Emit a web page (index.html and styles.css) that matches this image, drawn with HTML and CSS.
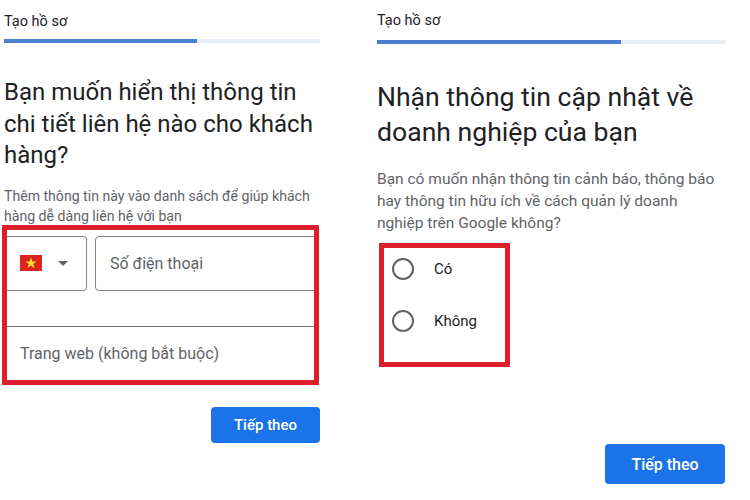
FILE: index.html
```html
<!DOCTYPE html>
<html lang="vi">
<head>
  <meta charset="UTF-8" />
  <title>Tạo hồ sơ</title>
  <link rel="stylesheet" href="styles.css">
</head>
<body>

  <section class="panel panel-left">
    <p class="top-title">Tạo hồ sơ</p>
    <div class="progress"><div class="progress-fill"></div></div>
    <h1>Bạn muốn hiển thị thông tin<br>chi tiết liên hệ nào cho khách<br>hàng?</h1>
    <p class="desc">Thêm thông tin này vào danh sách để giúp khách hàng dễ dàng liên hệ với bạn</p>

    <div class="mark contact-box">
      <div class="phone-row">
        <div class="country">
          <svg class="flag" width="22" height="16" viewBox="0 0 22 16">
            <rect width="22" height="16" fill="#d9251d"/>
            <polygon fill="#ffdf2b" points="11,2.5 12.5,6.4 16.5,6.4 13.3,8.9 14.4,13 11,10.6 7.6,13 8.7,8.9 5.5,6.4 9.5,6.4"/>
          </svg>
          <svg class="caret" width="10" height="5" viewBox="0 0 10 5">
            <polygon fill="#5f6368" points="0,0 10,0 5,5"/>
          </svg>
        </div>
        <div class="phone">Số điện thoại</div>
      </div>
      <div class="website">Trang web (không bắt buộc)</div>
    </div>

    <div class="actions"><button class="next-btn">Tiếp theo</button></div>
  </section>

  <section class="panel panel-right">
    <p class="top-title">Tạo hồ sơ</p>
    <div class="progress"><div class="progress-fill"></div></div>
    <h1>Nhận thông tin cập nhật về doanh nghiệp của bạn</h1>
    <p class="desc">Bạn có muốn nhận thông tin cảnh báo, thông báo hay thông tin hữu ích về cách quản lý doanh nghiệp trên Google không?</p>

    <div class="mark radio-box">
      <div class="radio-row"><span class="radio"></span><span>Có</span></div>
      <div class="radio-row"><span class="radio"></span><span>Không</span></div>
    </div>

    <div class="actions"><button class="next-btn">Tiếp theo</button></div>
  </section>

</body>
</html>
```

FILE: styles.css
```css
* {
  box-sizing: border-box;
  margin: 0;
  padding: 0;
}

body {
  width: 750px;
  height: 500px;
  overflow: hidden;
  display: flex;
  background: #fff;
  color: #202124;
  font-family: Roboto, sans-serif;
}

.panel {
  display: flex;
  flex-direction: column;
}

.panel-left {
  width: 316px;
  margin-left: 4px;
  padding-top: 13px;
}

.panel-right {
  width: 348px;
  margin-left: 57px;
  padding-top: 12px;
}

.top-title {
  font-size: 14.5px;
  line-height: 18px;
}

.progress {
  height: 4px;
  background: #e8eef8;
}

.panel-left .progress { margin-top: 8px; }
.panel-right .progress { margin-top: 10px; }

.progress-fill {
  height: 100%;
  background: #4a80cf;
}

.panel-left .progress-fill { width: 193px; }
.panel-right .progress-fill { width: 244px; }

h1 {
  font-weight: 400;
  color: #202124;
}

.panel-left h1 {
  font-size: 24px;
  line-height: 31.5px;
  margin-top: 34px;
  white-space: nowrap;
}

.panel-right h1 {
  font-size: 26.6px;
  line-height: 35px;
  margin-top: 35px;
}

.desc {
  color: #5f6368;
}

.panel-left .desc {
  font-size: 14.1px;
  line-height: 20px;
  margin-top: 14px;
}

.panel-right .desc {
  font-size: 15.5px;
  line-height: 22px;
  margin-top: 19px;
}

.mark {
  border: 5px solid #dc1f2b;
  overflow: hidden;
}

.contact-box {
  width: 317px;
  height: 160px;
  margin-top: -1px;
  margin-left: -2px;
  color: #5f6368;
  font-size: 16px;
}

.phone-row {
  display: flex;
  gap: 8px;
  margin-top: 6px;
  width: 320px;
  height: 55px;
}

.country,
.phone {
  border: 1px solid #80868b;
  display: flex;
  align-items: center;
}

.country {
  width: 80px;
  border-left: 0;
  border-radius: 0 4px 4px 0;
  padding-left: 13px;
  gap: 16px;
}

.phone {
  flex: 1;
  border-radius: 4px;
  padding-left: 14px;
}

.website {
  margin-top: 35px;
  border-top: 1px solid #70757a;
  padding: 17px 0 0 13px;
  line-height: 20px;
}

.radio-box {
  width: 131px;
  height: 124px;
  margin-top: 9px;
  margin-left: 2px;
  font-size: 15px;
  display: flex;
  flex-direction: column;
  gap: 10px;
}

.radio-row {
  display: flex;
  align-items: center;
  gap: 20px;
  height: 42px;
  padding-left: 8px;
}

.radio {
  width: 22px;
  height: 22px;
  border: 2px solid #5f6368;
  border-radius: 50%;
}

.actions {
  display: flex;
  justify-content: flex-end;
}

.panel-left .actions { margin-top: 22px; }
.panel-right .actions { margin-top: 77px; }

.next-btn {
  border: 0;
  border-radius: 4px;
  background: #1a73e8;
  color: #fff;
  font-family: Roboto, sans-serif;
  font-weight: 500;
}

.panel-left .next-btn {
  width: 109px;
  height: 36px;
  font-size: 15px;
}

.panel-right .next-btn {
  width: 120px;
  height: 40px;
  font-size: 16px;
}
```
